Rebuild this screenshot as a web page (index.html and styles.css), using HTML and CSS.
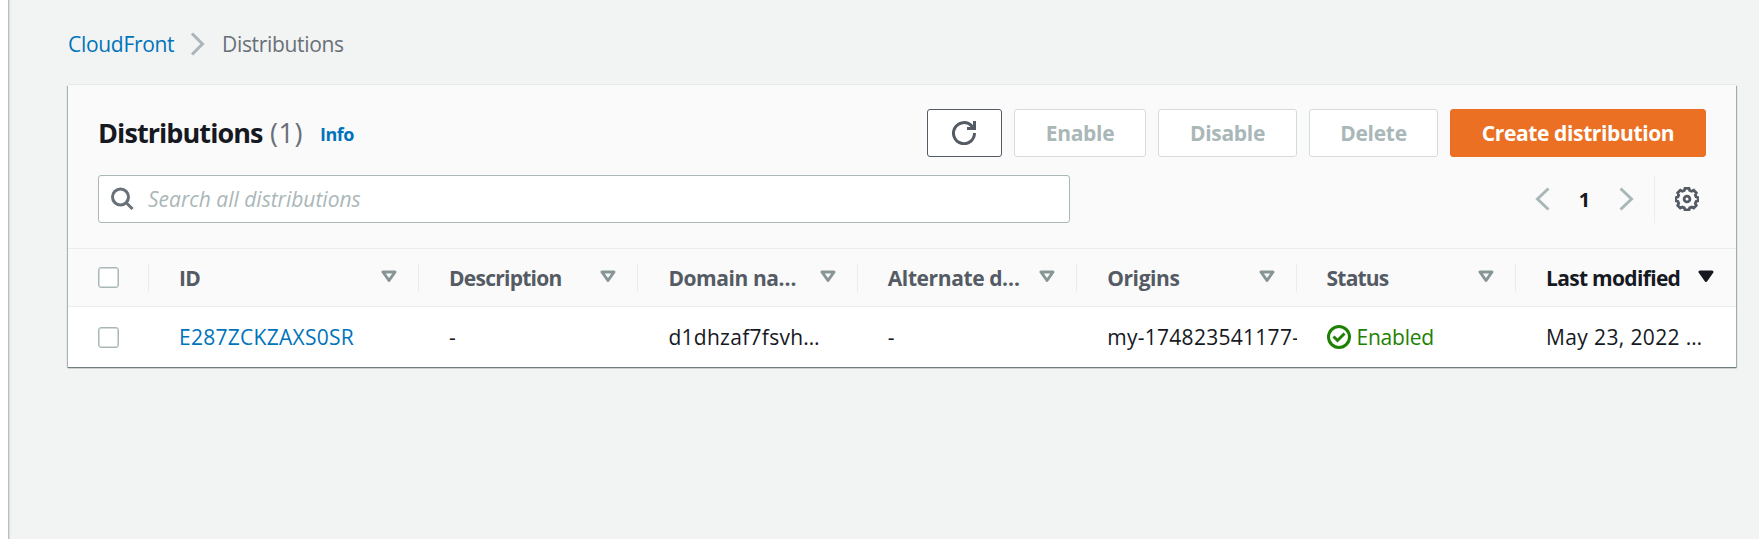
FILE: index.html
```html
<!DOCTYPE html>
<html lang="en">
<head>
<meta charset="utf-8">
<title>CloudFront Distributions</title>
<link rel="stylesheet" href="styles.css">
</head>
<body>
<div class="app">
  <div class="nav-edge"></div>
  <main class="content">
    <nav class="breadcrumbs">
      <a class="crumb-link" href="#">CloudFront</a>
      <svg class="crumb-sep" viewBox="0 0 24 24"><path d="M7 1.5 17.5 12 7 22.5"/></svg>
      <span class="crumb-current">Distributions</span>
    </nav>
    <section class="card">
      <header class="card-header">
        <div class="title-row">
          <h1 class="title">Distributions</h1>
          <span class="count">(1)</span>
          <a class="info" href="#">Info</a>
          <div class="actions">
            <button class="btn btn-icon" aria-label="Refresh">
              <svg class="icon" viewBox="0 0 24 24"><path d="M22.5 12A10.5 10.5 0 1 1 19.8 5.1L22 7.6"/><path d="M22.5 0v7.5H15"/></svg>
            </button>
            <button class="btn btn-disabled enable">Enable</button>
            <button class="btn btn-disabled disable">Disable</button>
            <button class="btn btn-disabled delete">Delete</button>
            <button class="btn btn-primary">Create distribution</button>
          </div>
        </div>
        <div class="tools-row">
          <div class="search">
            <svg class="search-icon" viewBox="0 0 24 24"><circle cx="10.5" cy="10" r="8"/><path d="m16 15.500 6.500 6.500"/></svg>
            <span class="placeholder">Search all distributions</span>
          </div>
          <div class="pager">
            <svg class="chevron" viewBox="0 0 24 24"><path d="M17.500 1.500 6.500 12l11 10.500"/></svg>
            <span class="page">1</span>
            <svg class="chevron" viewBox="0 0 24 24"><path d="M6.500 1.500 17.500 12l-11 10.500"/></svg>
          </div>
          <div class="settings">
            <svg class="gear" viewBox="0 0 24 24"><path d="M10 1.400h4l.7 2.100 1.900.8 2.100-1 2.600 2.600-1 2.100.8 1.900 2.100.7v3.200l-2.100.7-.8 1.900 1 2.100-2.600 2.600-2.100-1-1.900.8-.7 2.100h-4l-.7-2.100-1.900-.8-2.100 1-2.600-2.600 1-2.100-.8-1.900-2.100-.7v-3.200l2.100-.7.8-1.900-1-2.100 2.600-2.600 2.100 1 1.900-.8z"/><circle cx="12" cy="12" r="2.900"/></svg>
          </div>
        </div>
      </header>
      <div class="grid head">
        <div class="cell check"><span class="box"></span></div>
        <div class="cell"><span class="label w-id">ID</span><svg class="sort" viewBox="0 0 16 13"><path d="M2 2h12L8 10.500z"/></svg></div>
        <div class="cell"><span class="label w-desc">Description</span><svg class="sort" viewBox="0 0 16 13"><path d="M2 2h12L8 10.500z"/></svg></div>
        <div class="cell"><span class="label w-domain">Domain na…</span><svg class="sort" viewBox="0 0 16 13"><path d="M2 2h12L8 10.500z"/></svg></div>
        <div class="cell"><span class="label w-alt">Alternate d…</span><svg class="sort" viewBox="0 0 16 13"><path d="M2 2h12L8 10.500z"/></svg></div>
        <div class="cell"><span class="label w-origins">Origins</span><svg class="sort" viewBox="0 0 16 13"><path d="M2 2h12L8 10.500z"/></svg></div>
        <div class="cell"><span class="label w-status">Status</span><svg class="sort" viewBox="0 0 16 13"><path d="M2 2h12L8 10.500z"/></svg></div>
        <div class="cell active"><span class="label w-mod">Last modified</span><svg class="sort" viewBox="0 0 16 13"><path d="M2 2h12L8 10.500z"/></svg></div>
      </div>
      <div class="grid row">
        <div class="cell check"><span class="box"></span></div>
        <div class="cell"><a class="id-link" href="#">E287ZCKZAXS0SR</a></div>
        <div class="cell">-</div>
        <div class="cell domain">d1dhzaf7fsvh…</div>
        <div class="cell">-</div>
        <div class="cell origin">my-174823541177-</div>
        <div class="cell status"><svg class="ok" viewBox="0 0 24 24"><circle cx="12" cy="12" r="10.500"/><path d="m6.500 11.500 4 4 7-7"/></svg><span>Enabled</span></div>
        <div class="cell modified">May 23, 2022 …</div>
      </div>
    </section>
  </main>
</div>
</body>
</html>
```
FILE: styles.css
```css
* { box-sizing: border-box; }
body {
  margin: 0;
  background: #f2f3f3;
  color: #16191f;
  font: 21px/33px "Open Sans", "Noto Sans", sans-serif;
}
a { color: #0073bb; text-decoration: none; }
svg { display: block; flex: none; fill: none; }
.app { display: flex; height: 539px; overflow: hidden; }
.nav-edge { width: 9px; background: #fff; border-right: 1px solid #b9bfc0; box-shadow: 1px 0 1px #dcdfdf; flex: none; }
.content { flex: 1; padding: 27px 23px 0 59px; }

.breadcrumbs { display: flex; align-items: center; height: 33px; }
.crumb-link { letter-spacing: -.3px; width: 117px; padding-top: 1px; }
.crumb-sep { width: 24px; height: 24px; stroke: #aab7b8; stroke-width: 3; margin-right: 13px; }
.crumb-current { color: #687078; letter-spacing: -.32px; padding-top: 1px; }

.card { margin-top: 25px; height: 282px; background: #fff; box-shadow: 0 -1px 0 #e7eaea, 0 1px 1px #6f7f80, 1px 1px 1px #aab7b8, -1px 1px 1px #b5bfc0; }
.card-header { background: #fafafa; height: 163px; padding: 24px 30px 0; }
.title-row { display: flex; align-items: center; height: 48px; }
.title { margin: 0; font-size: 27px; font-weight: 700; letter-spacing: -.92px; width: 172px; padding-bottom: 2px; }
.count { font-size: 27px; color: #687078; letter-spacing: .6px; width: 50px; padding-bottom: 2px; }
.info { font-size: 18px; font-weight: 700; letter-spacing: -.5px; padding-top: 2px; }
.actions { display: flex; gap: 12px; margin-left: auto; }
.btn {
  height: 48px; padding: 1px 0 0; border: 1px solid #d5dbdb; border-radius: 3px; background: #fff;
  font: 700 21px/33px "Open Sans", "Noto Sans", sans-serif; letter-spacing: -.3px;
  display: flex; align-items: center; justify-content: center;
}
.btn-icon { width: 75px; border-color: #545b64; padding: 0 1px 0 0; }
.btn-disabled { color: #aab7b8; }
.enable { width: 132px; }
.disable { width: 139px; }
.delete { width: 129px; }
.btn-primary { width: 256px; color: #fff; background: #eb7024; border-color: #eb7024; letter-spacing: -.37px; }
.icon { width: 24px; height: 24px; stroke: #545b64; stroke-width: 3; }

.tools-row { display: flex; align-items: center; margin-top: 18px; height: 48px; }
.search { width: 972px; height: 48px; display: flex; align-items: center; background: #fff; border: 1px solid #aab7b8; border-radius: 3px; padding-left: 11px; }
.search-icon { width: 24px; height: 24px; stroke: #687078; stroke-width: 3; margin-right: 14px; }
.placeholder { font-style: italic; color: #aab7b8; padding-top: 1px; }
.pager { display: flex; align-items: center; margin-left: auto; }
.chevron { width: 24px; height: 24px; stroke: #aab7b8; stroke-width: 3; }
.page { width: 59px; text-align: center; font-weight: 700; font-size: 20px; padding-top: 1px; }
.settings { display: flex; align-items: center; height: 48px; margin-left: 16px; border-left: 1px solid #eaeded; padding: 0 7px 0 20px; }
.gear { width: 24px; height: 24px; stroke: #545b64; stroke-width: 2.8; }

.grid { display: grid; grid-template-columns: 81px 270px 219.4px 219.4px 219.4px 219.4px 219.4px 1fr; }
.head { height: 59px; background: #fafafa; border-top: 1px solid #eaeded; border-bottom: 1px solid #eaeded; }
.row { height: 60px; }
.cell { display: flex; align-items: center; padding: 1px 0 0 30px; white-space: nowrap; overflow: hidden; min-width: 0; }
.check { padding-top: 0; }
.head .cell { color: #545b64; font-weight: 700; padding-right: 22px; }
.head .cell:not(:last-child) { background: linear-gradient(#eaeded, #eaeded) right center / 1px 28px no-repeat; }
.box { width: 21px; height: 21px; border: 1px solid #aab7b8; border-radius: 3px; background: #fff; box-shadow: inset 0 0 0 .5px #aab7b8; flex: none; }
.label { flex: 1; }
.sort { width: 16px; height: 13px; stroke: #879596; stroke-width: 3; stroke-linejoin: round; margin-bottom: 3px; }
.head .active { color: #16191f; }
.active .sort { stroke: #16191f; fill: #16191f; }
.w-id { letter-spacing: -.8px; }
.w-desc { letter-spacing: -.75px; }
.w-domain { letter-spacing: -.43px; }
.w-alt { letter-spacing: -.4px; }
.w-origins { letter-spacing: -.4px; }
.w-status { letter-spacing: -.8px; }
.w-mod { letter-spacing: -.68px; }
.id-link { letter-spacing: .27px; }
.domain { letter-spacing: .28px; }
.origin { letter-spacing: .28px; }
.status { color: #1d8102; letter-spacing: -.25px; }
.ok { width: 24px; height: 24px; stroke: #1d8102; stroke-width: 3; margin: 0 6px 1px 0; }
.modified { letter-spacing: .38px; }
```
